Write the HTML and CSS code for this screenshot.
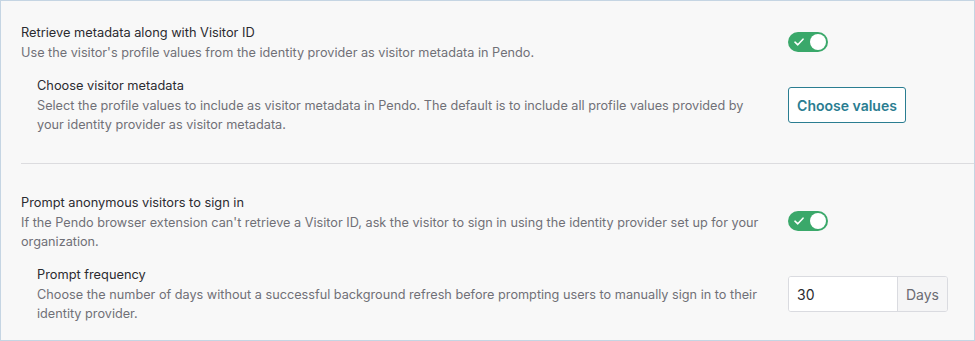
FILE: index.html
```html
<!DOCTYPE html>
<html lang="en">
<head>
<meta charset="utf-8">
<title>Settings</title>
<link rel="stylesheet" href="styles.css">
</head>
<body>
<div class="panel">
  <section class="section">
    <div class="row">
      <div class="text">
        <div class="title">Retrieve metadata along with Visitor ID</div>
        <div class="desc">Use the visitor's profile values from the identity provider as visitor metadata in Pendo.</div>
      </div>
      <div class="control">
        <span class="toggle" role="switch" aria-checked="true">
          <svg class="check" width="10" height="8" viewBox="0 0 10 8"><path d="M1 4.2 L3.8 6.8 L9 1.2" fill="none" stroke="#fff" stroke-width="1.6" stroke-linecap="round" stroke-linejoin="round"/></svg>
          <span class="knob"></span>
        </span>
      </div>
    </div>
    <div class="row sub">
      <div class="text">
        <div class="title">Choose visitor metadata</div>
        <div class="desc">Select the profile values to include as visitor metadata in Pendo. The default is to include all profile values provided by your identity provider as visitor metadata.</div>
      </div>
      <div class="control">
        <button class="btn">Choose values</button>
      </div>
    </div>
  </section>
  <section class="section second">
    <div class="row">
      <div class="text">
        <div class="title">Prompt anonymous visitors to sign in</div>
        <div class="desc">If the Pendo browser extension can't retrieve a Visitor ID, ask the visitor to sign in using the identity provider set up for your organization.</div>
      </div>
      <div class="control">
        <span class="toggle" role="switch" aria-checked="true">
          <svg class="check" width="10" height="8" viewBox="0 0 10 8"><path d="M1 4.2 L3.8 6.8 L9 1.2" fill="none" stroke="#fff" stroke-width="1.6" stroke-linecap="round" stroke-linejoin="round"/></svg>
          <span class="knob"></span>
        </span>
      </div>
    </div>
    <div class="row sub">
      <div class="text">
        <div class="title">Prompt frequency</div>
        <div class="desc">Choose the number of days without a successful background refresh before prompting users to manually sign in to their identity provider.</div>
      </div>
      <div class="control">
        <div class="input-group">
          <input class="num" type="text" value="30">
          <span class="addon">Days</span>
        </div>
      </div>
    </div>
  </section>
</div>
</body>
</html>
```
FILE: styles.css
```css
* { box-sizing: border-box; }
html, body { margin: 0; padding: 0; }
body {
  font-family: Inter, "Noto Sans", sans-serif;
  background: #f8f8f8;
  width: 975px;
  height: 341px;
  overflow: hidden;
}
.panel {
  width: 975px;
  height: 341px;
  border: 1px solid #c5d5e3;
  background: #f8f8f8;
  display: flex;
  flex-direction: column;
}
.section {
  margin-left: 20px;
  padding-top: 22px;
  padding-bottom: 29px;
}
.section.second {
  border-top: 1px solid #dcdcdf;
  padding-top: 29px;
  padding-bottom: 0;
}
.row {
  display: grid;
  grid-template-columns: 1fr 186px;
  column-gap: 20px;
  align-items: center;
}
.row.sub {
  padding-left: 16px;
  margin-top: 14px;
}
.title {
  font-size: 12.8px;
  line-height: 20px;
  color: #2b2b30;
}
.desc {
  font-size: 12.7px;
  line-height: 19px;
  color: #707077;
}
.control {
  display: flex;
  align-items: center;
}
.toggle {
  position: relative;
  width: 40px;
  height: 20px;
  border-radius: 10px;
  background: #3aa86a;
  display: inline-block;
  margin-top: -2px;
}
.check {
  position: absolute;
  left: 6px;
  top: 6px;
}
.knob {
  position: absolute;
  right: 2px;
  top: 2px;
  width: 16px;
  height: 16px;
  border-radius: 50%;
  background: #fff;
}
.btn {
  font-family: Inter, "Noto Sans", sans-serif;
  font-size: 14px;
  font-weight: 600;
  color: #2a7d91;
  background: #fff;
  border: 1px solid #2a7d91;
  border-radius: 3px;
  height: 36px;
  width: 118px;
  padding: 0;
}
.input-group {
  display: flex;
  width: 160px;
  height: 36px;
  border: 1px solid #dadbe0;
  border-radius: 3px;
  background: #fff;
  overflow: hidden;
}
.num {
  flex: 1;
  min-width: 0;
  border: 0;
  outline: none;
  font-family: Inter, "Noto Sans", sans-serif;
  font-size: 14px;
  color: #2a2a2e;
  padding: 0 8px;
  background: #fff;
}
.addon {
  width: 50px;
  border-left: 1px solid #dadbe0;
  background: #f5f5f6;
  color: #6b6b72;
  font-size: 14px;
  display: flex;
  align-items: center;
  justify-content: center;
}
```
